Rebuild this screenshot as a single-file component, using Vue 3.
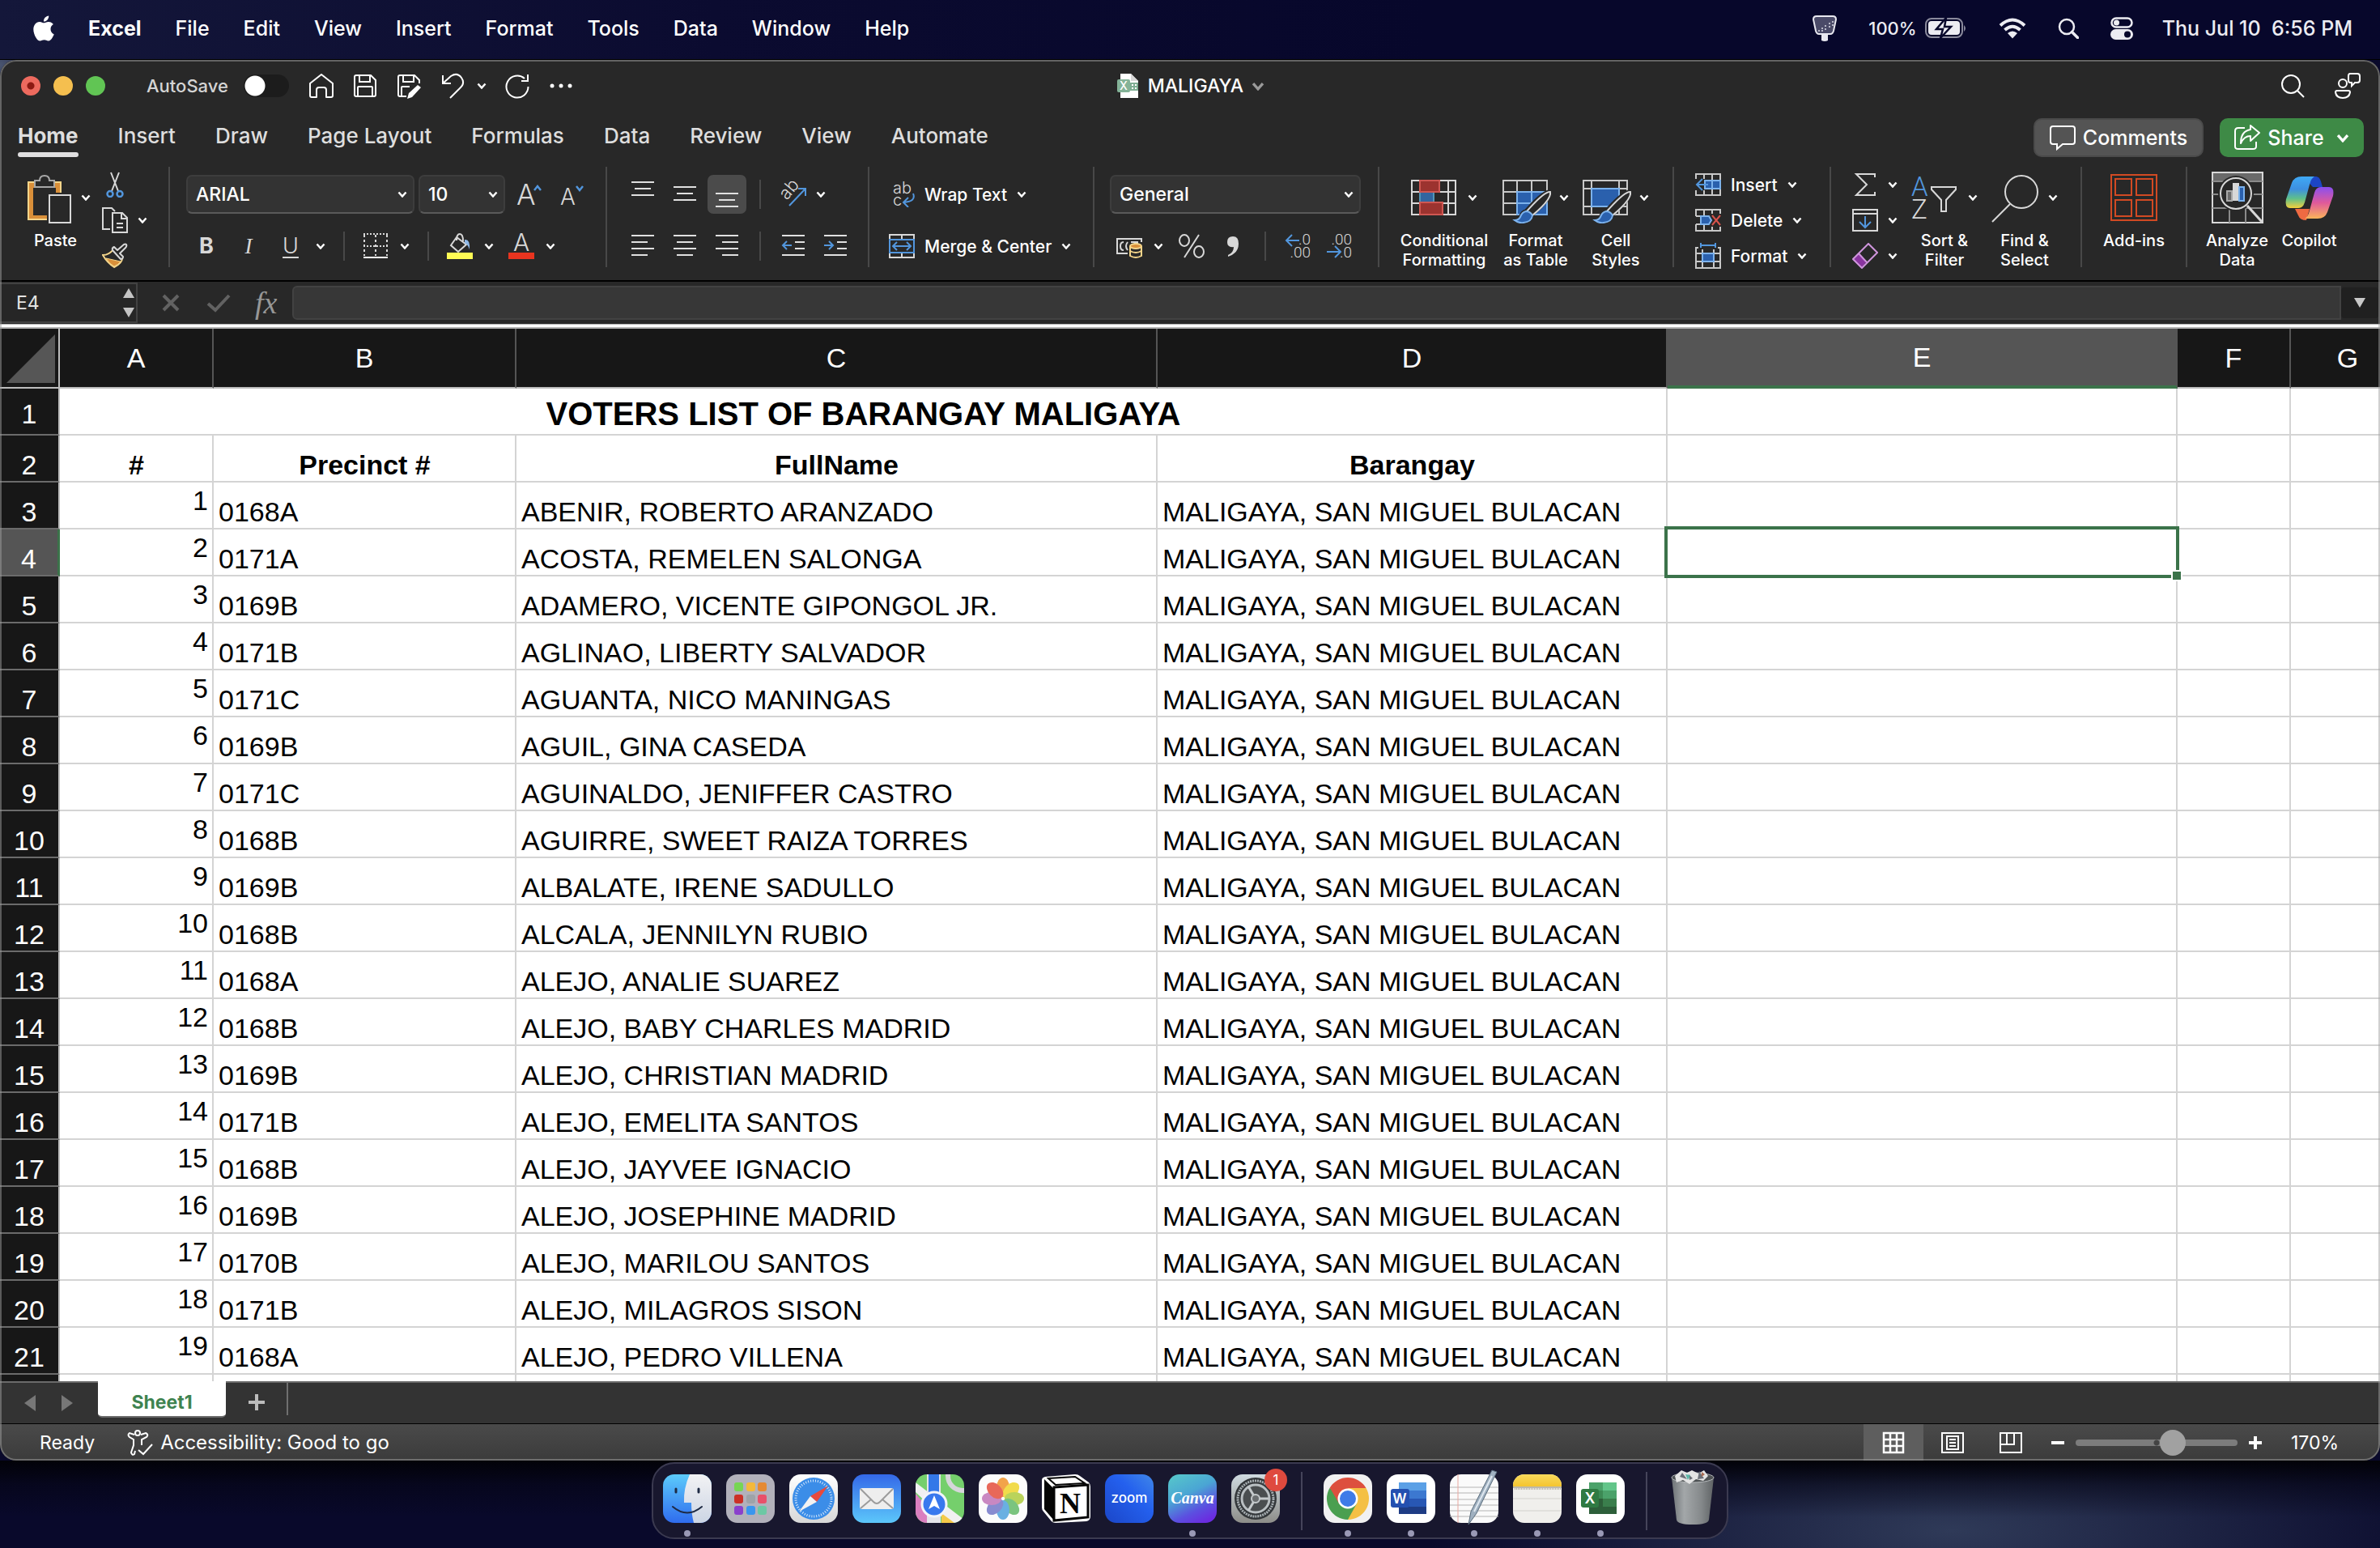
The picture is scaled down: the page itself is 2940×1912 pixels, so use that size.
<script setup>
import { ref } from 'vue'

const menus = ['File', 'Edit', 'View', 'Insert', 'Format', 'Tools', 'Data', 'Window', 'Help']
const tabs = ['Home', 'Insert', 'Draw', 'Page Layout', 'Formulas', 'Data', 'Review', 'View', 'Automate']
const activeTab = ref('Home')

const autoSave = ref(false)
const fontName = ref('ARIAL')
const fontSize = ref('10')
const numberFormat = ref('General')
const cellName = ref('E4')
const formula = ref('')
const zoomStep = ref(62)

const columns = ['A', 'B', 'C', 'D', 'E', 'F', 'G']
const barangay = 'MALIGAYA, SAN MIGUEL BULACAN'

const voters = [
  ['0168A', 'ABENIR, ROBERTO ARANZADO'],
  ['0171A', 'ACOSTA, REMELEN SALONGA'],
  ['0169B', 'ADAMERO, VICENTE GIPONGOL JR.'],
  ['0171B', 'AGLINAO, LIBERTY SALVADOR'],
  ['0171C', 'AGUANTA, NICO MANINGAS'],
  ['0169B', 'AGUIL, GINA CASEDA'],
  ['0171C', 'AGUINALDO, JENIFFER CASTRO'],
  ['0168B', 'AGUIRRE, SWEET RAIZA TORRES'],
  ['0169B', 'ALBALATE, IRENE SADULLO'],
  ['0168B', 'ALCALA, JENNILYN RUBIO'],
  ['0168A', 'ALEJO, ANALIE SUAREZ'],
  ['0168B', 'ALEJO, BABY CHARLES MADRID'],
  ['0169B', 'ALEJO, CHRISTIAN MADRID'],
  ['0171B', 'ALEJO, EMELITA SANTOS'],
  ['0168B', 'ALEJO, JAYVEE IGNACIO'],
  ['0169B', 'ALEJO, JOSEPHINE MADRID'],
  ['0170B', 'ALEJO, MARILOU SANTOS'],
  ['0171B', 'ALEJO, MILAGROS SISON'],
  ['0168A', 'ALEJO, PEDRO VILLENA'],
]

const dockApps = [
  { id: 'finder', open: true },
  { id: 'launchpad' },
  { id: 'safari' },
  { id: 'mail' },
  { id: 'maps' },
  { id: 'photos' },
  { id: 'notion' },
  { id: 'zoom', label: 'zoom' },
  { id: 'canva', label: 'Canva', open: true },
  { id: 'settings', badge: 1 },
]
const dockRecent = [
  { id: 'chrome', open: true },
  { id: 'word', open: true },
  { id: 'textedit', open: true },
  { id: 'notes', open: true },
  { id: 'excel', open: true },
]
</script>

<template>
  <div class="desktop">
    <!-- Gradients and clips -->
    <svg class="defs" aria-hidden="true">
      <defs>
        <linearGradient id="g-finder" x2="0" y2="1"><stop stop-color="#5ccbfb" /><stop offset="1" stop-color="#2f6cee" /></linearGradient>
        <linearGradient id="g-face" x2="0" y2="1"><stop stop-color="#f2f2f4" /><stop offset="1" stop-color="#ccd5e4" /></linearGradient>
        <linearGradient id="g-mail" x2="0" y2="1"><stop stop-color="#3468e8" /><stop offset="1" stop-color="#5cc7fa" /></linearGradient>
        <linearGradient id="g-white" x2="0" y2="1"><stop stop-color="#ffffff" /><stop offset="1" stop-color="#d8d8d8" /></linearGradient>
        <linearGradient id="g-zoom" x1="1" x2="0" y2="1"><stop stop-color="#4087e8" /><stop offset=".4" stop-color="#2460ee" /><stop offset="1" stop-color="#1b46c8" /></linearGradient>
        <linearGradient id="g-canva" x1=".2" x2=".7" y2="1"><stop stop-color="#55c3cb" /><stop offset=".4" stop-color="#4aa5d4" /><stop offset=".75" stop-color="#5b50e0" /><stop offset="1" stop-color="#6b2ce0" /></linearGradient>
        <linearGradient id="g-gear" x2="0" y2="1"><stop stop-color="#cfdae0" /><stop offset="1" stop-color="#8d8d89" /></linearGradient>
        <linearGradient id="g-notes" x2="0" y2="1"><stop stop-color="#f8d95c" /><stop offset="1" stop-color="#f5c52f" /></linearGradient>
        <linearGradient id="g-trash" x2="1" y2="0"><stop stop-color="#6e7376" /><stop offset=".3" stop-color="#a3a7a9" /><stop offset=".7" stop-color="#85898b" /><stop offset="1" stop-color="#5f6365" /></linearGradient>
        <linearGradient id="g-cop1" x2="0" y2="1"><stop stop-color="#3fa9f5" /><stop offset=".4" stop-color="#3d8fe0" /><stop offset=".7" stop-color="#5fc08a" /><stop offset="1" stop-color="#f5d03c" /></linearGradient>
        <linearGradient id="g-cop2" x2="0" y2="1"><stop stop-color="#8b4ff0" /><stop offset=".5" stop-color="#e05a9a" /><stop offset="1" stop-color="#fbb45a" /></linearGradient>
        <clipPath id="c-app"><rect width="60" height="60" rx="14" /></clipPath>
      </defs>
    </svg>

    <!-- Icon shapes -->
    <svg class="symbols" aria-hidden="true">
      <symbol id="i-apple" viewBox="2 0 20 24">
        <path fill="#fff" d="M12.152 6.896c-.948 0-2.415-1.078-3.96-1.04-2.04.027-3.91 1.183-4.961 3.014-2.117 3.675-.546 9.103 1.519 12.09 1.013 1.454 2.208 3.09 3.792 3.039 1.52-.065 2.09-.987 3.935-.987 1.831 0 2.35.987 3.96.948 1.637-.026 2.676-1.48 3.676-2.948 1.156-1.688 1.636-3.325 1.662-3.415-.039-.013-3.182-1.221-3.22-4.857-.026-3.04 2.48-4.494 2.597-4.559-1.429-2.09-3.623-2.324-4.39-2.376-2-.156-3.675 1.09-4.61 1.09zM15.53 3.83c.843-1.012 1.4-2.427 1.245-3.83-1.207.052-2.662.805-3.532 1.818-.78.896-1.454 2.338-1.273 3.714 1.338.104 2.715-.688 3.559-1.701" />
      </symbol>
      <symbol id="i-chev" viewBox="0 0 12 8"><path d="M1.500 1.500 6 6.500l4.500-5" fill="none" stroke="currentColor" stroke-width="2.500" /></symbol>
      <symbol id="i-brushapp" viewBox="0 0 30 32">
        <path d="M5 1h20q4 0 4 4l-3 14q-1 4-4 4H8q-3 0-4-4L1 5q0-4 4-4z" fill="#4a4a68" stroke="#e8e8f0" stroke-width="2" />
        <path d="M11 23h8v8q-4 2-8 0z" fill="#e8e8f0" />
        <path d="M7 19h2m2-3h2m-2 3h2m2-6h2m-2 4h2m3-7h2m-2 4h2m2-6h2m-2 4h2" stroke="#b8b8c8" stroke-width="2" />
      </symbol>
      <symbol id="i-battery" viewBox="0 0 52 26">
        <rect x="1" y="1" width="45" height="23" rx="7" fill="none" stroke="#8a8a9c" stroke-width="2" />
        <rect x="4" y="4" width="39" height="17" rx="4" fill="#ececf2" />
        <path d="M48 9q4 4 0 8z" fill="#8a8a9c" />
        <path d="M26 0 14 14h8l-3 11 13-14h-8z" fill="#ececf2" stroke="#07072b" stroke-width="2.500" />
      </symbol>
      <symbol id="i-wifi" viewBox="0 0 34 26">
        <g fill="none" stroke="#ececf2" stroke-width="4"><path d="M2 9.500q15-14 30 0" /><path d="M7.500 15q9.500-8.500 19 0" /></g>
        <path d="M17 25.500 11 19q6-5 12 0z" fill="#ececf2" />
      </symbol>
      <symbol id="i-spot" viewBox="0 0 26 26"><circle cx="11" cy="11" r="9" fill="none" stroke="#ececf2" stroke-width="2.500" /><path d="m17.500 17.500 7 7" stroke="#ececf2" stroke-width="3.500" stroke-linecap="round" /></symbol>
      <symbol id="i-control" viewBox="0 0 28 28">
        <rect x="1.500" y="1.500" width="25" height="11" rx="5.500" fill="none" stroke="#ececf2" stroke-width="2.500" /><circle cx="7.500" cy="7" r="3.500" fill="#ececf2" />
        <rect x="0" y="15" width="28" height="13" rx="6.500" fill="#ececf2" /><circle cx="21" cy="21.500" r="4" fill="#07072b" />
      </symbol>

      <symbol id="i-home" viewBox="0 0 32 32"><path d="M2 13 16 2l14 11v15q0 2-2 2h-6v-9q0-3-3-3h-6q-3 0-3 3v9H4q-2 0-2-2z" fill="none" stroke="#fff" stroke-width="2" stroke-linejoin="round" /></symbol>
      <symbol id="i-save" viewBox="0 0 32 32"><path d="M5 3h18l6 6v18q0 2-2 2H5q-2 0-2-2V5q0-2 2-2zM9 3v8h13V3M7 29V18q0-1 1-1h16q1 0 1 1v11" fill="none" stroke="#fff" stroke-width="2" /></symbol>
      <symbol id="i-savepen" viewBox="0 0 32 32"><path d="M13 29H5q-2 0-2-2V5q0-2 2-2h18l6 6v4M9 3v8h13V3M7 29V18q0-1 1-1h9" fill="none" stroke="#fff" stroke-width="2" /><path d="m27 15 4 3-11 12-6 2 2-7z" fill="#fff" /></symbol>
      <symbol id="i-undo" viewBox="0 0 32 32"><path d="M4 3v10h10M4 13 14 4q8-5 13 2t-2 13L13 31" fill="none" stroke="#fff" stroke-width="2" /></symbol>
      <symbol id="i-redo" viewBox="0 0 32 32"><path d="M25 7A13.500 13.500 0 1 0 29.500 17M29 2v8h-8" fill="none" stroke="#fff" stroke-width="2" /></symbol>
      <symbol id="i-dots" viewBox="0 0 32 32"><g fill="#fff"><circle cx="5" cy="16" r="2.500" /><circle cx="16" cy="16" r="2.500" /><circle cx="27" cy="16" r="2.500" /></g></symbol>
      <symbol id="i-file" viewBox="0 0 28 30">
        <path d="M4 0h13l9 9v21H4z" fill="#fff" /><path d="M17 0v9h9z" fill="#d8d8d8" />
        <path d="M17 12h8v8h-8zM21 12v8M17 16h8" fill="none" stroke="#7fae93" stroke-width="2" />
        <rect y="7" width="16" height="16" rx="2" fill="#84b398" /><text x="8" y="20" font-size="14" text-anchor="middle" fill="#fff" font-family="Inter, sans-serif">X</text>
      </symbol>
      <symbol id="i-find" viewBox="0 0 32 32"><circle cx="14" cy="14" r="11" fill="none" stroke="#fff" stroke-width="2" /><path d="m22 22 8 8" stroke="#fff" stroke-width="2" /></symbol>
      <symbol id="i-people" viewBox="0 0 32 32"><g fill="none" stroke="#fff" stroke-width="2"><circle cx="10" cy="13" r="5" /><path d="M3 22h14q2 0 2 2-1 7-9 7t-9-7q0-2 2-2zM19 1h9q3 0 3 3v5q0 3-3 3h-3l-4 4v-4h-2q-2 0-2-3V4q0-3 2-3z" /></g></symbol>
      <symbol id="i-comment" viewBox="0 0 32 32"><path d="M4 2h24q3 0 3 3v16q0 3-3 3H16l-7 6v-6H4q-3 0-3-3V5q0-3 3-3z" fill="none" stroke="#fff" stroke-width="2" /></symbol>
      <symbol id="i-share" viewBox="0 0 32 32"><path d="M13 4H5q-4 0-4 4v19q0 3 4 3h18q4 0 4-3v-6M20 1l11 9-11 10v-6q-8 0-12 9 0-15 12-17z" fill="none" stroke="#fff" stroke-width="2" stroke-linejoin="round" /></symbol>

      <symbol id="i-paste" viewBox="0 0 56 64">
        <path d="M0 12h42v14h-2V14H2v44h22v2H0z" fill="#f4d58a" /><path d="M2 14h38v12h-5V20H7v34h17v4H2z" fill="#d98f39" />
        <path d="M9 19v-8h6q0-6 6-6t6 6h6v8z" fill="#282828" stroke="#a8a8a8" stroke-width="2" />
        <path d="M27 29h26v34H27z" fill="#282828" stroke="#d8d8d8" stroke-width="2" />
      </symbol>
      <symbol id="i-cut" viewBox="0 0 32 32"><path d="M11 1 20 24M21 1 12 24" stroke="#d8d8d8" stroke-width="2" /><g fill="none" stroke="#5296dd" stroke-width="2.500"><circle cx="10" cy="27.500" r="3.500" /><circle cx="22" cy="27.500" r="3.500" /></g></symbol>
      <symbol id="i-copy" viewBox="0 0 32 32"><path d="M10 27H1V1h11l4 4M13 7h12l6 6v18H13zM24 7v7h7M18 20h8M18 25h8" fill="none" stroke="#d8d8d8" stroke-width="2" /></symbol>
      <symbol id="i-painter" viewBox="0 0 32 32">
        <path d="M1 15q8 0 13-7l11 11q0 6-10 11Q6 24 1 15z" fill="#282828" stroke="#f4d58a" stroke-width="2" /><path d="m5 19 18 4q-3 4-8 6-6-3-10-10z" fill="#d98f39" stroke="#f4d58a" stroke-width="1" />
        <path d="m15 5 4 4 8-7q2-1 3 0 1 2-1 4l-7 7 4 4q0 3-3 3L13 9q-1-3 2-4z" fill="#282828" stroke="#d8d8d8" stroke-width="2" stroke-linejoin="round" />
      </symbol>
      <symbol id="i-grow" viewBox="0 0 32 32"><text x="0" y="29" font-size="35" font-weight="300" fill="#d8d8d8" font-family="Inter, sans-serif">A</text><path d="m22 11 4-5 4 5" fill="none" stroke="#5296dd" stroke-width="2.500" /></symbol>
      <symbol id="i-shrink" viewBox="0 0 32 32"><text x="2" y="29" font-size="28" font-weight="300" fill="#d8d8d8" font-family="Inter, sans-serif">A</text><path d="m22 6 4 5 4-5" fill="none" stroke="#5296dd" stroke-width="2.500" /></symbol>
      <symbol id="i-border" viewBox="0 0 32 32"><path d="M1 1h30M1 16h30" stroke="#d8d8d8" stroke-width="2" stroke-dasharray="2 2" /><path d="M2 2v26M16 2v26M30 2v26" stroke="#d8d8d8" stroke-width="2" stroke-dasharray="3 3" /><path d="M1 30h30" stroke="#fff" stroke-width="2" /></symbol>
      <symbol id="i-fill" viewBox="0 0 32 32"><path d="M12 5 5 15l9 8 10-9zM12 9q0-8 4-8t4 9" fill="none" stroke="#d8d8d8" stroke-width="2" /><path d="M22 8q7-1 6 12-2-6-6-8z" fill="#8db8e8" /><path d="M0 24h32v8H0z" fill="#fffb54" /></symbol>
      <symbol id="i-color" viewBox="0 0 32 32"><text x="16" y="22" font-size="30" font-weight="300" text-anchor="middle" fill="#d8d8d8" font-family="Inter, sans-serif">A</text><path d="M0 24h32v8H0z" fill="#e8341f" /></symbol>

      <symbol id="i-top" viewBox="0 0 32 32"><path d="M2 1h28M6 9h20M2 17h28" stroke="#e0e0e0" stroke-width="2" /></symbol>
      <symbol id="i-mid" viewBox="0 0 32 32"><path d="M2 7h28M6 15h20M2 23h28" stroke="#e0e0e0" stroke-width="2" /></symbol>
      <symbol id="i-bot" viewBox="0 0 32 32"><path d="M2 15h28M6 23h20M2 31h28" stroke="#e0e0e0" stroke-width="2" /></symbol>
      <symbol id="i-left" viewBox="0 0 32 32"><path d="M2 3h28M2 11h20M2 19h28M2 27h20" stroke="#e0e0e0" stroke-width="2" /></symbol>
      <symbol id="i-center" viewBox="0 0 32 32"><path d="M2 3h28M6 11h20M2 19h28M6 27h20" stroke="#e0e0e0" stroke-width="2" /></symbol>
      <symbol id="i-right" viewBox="0 0 32 32"><path d="M2 3h28M10 11h20M2 19h28M10 27h20" stroke="#e0e0e0" stroke-width="2" /></symbol>
      <symbol id="i-outdent" viewBox="0 0 32 32"><path d="M2 3h28M18 11h12M18 19h12M2 27h28" stroke="#e0e0e0" stroke-width="2" /><path d="M14 15H3m5-5-5 5 5 5" fill="none" stroke="#5296dd" stroke-width="2" /></symbol>
      <symbol id="i-indent" viewBox="0 0 32 32"><path d="M2 3h28M18 11h12M18 19h12M2 27h28" stroke="#e0e0e0" stroke-width="2" /><path d="M2 15h11m-5-5 5 5-5 5" fill="none" stroke="#5296dd" stroke-width="2" /></symbol>
      <symbol id="i-orient" viewBox="0 0 32 32"><text x="0" y="0" transform="translate(8 24) rotate(-50)" font-size="22" font-weight="300" fill="#d8d8d8" font-family="Inter, sans-serif">ab</text><path d="m11 30 20-21M22 9h9v9" fill="none" stroke="#5296dd" stroke-width="2" /></symbol>
      <symbol id="i-wrap" viewBox="0 0 32 32"><text x="5" y="15" font-size="20" font-weight="300" fill="#d8d8d8" font-family="Inter, sans-serif">ab</text><text x="5" y="30" font-size="20" font-weight="300" fill="#d8d8d8" font-family="Inter, sans-serif">c</text><path d="M30 15q4 10-12 11m6-6-6 6 6 6" fill="none" stroke="#5296dd" stroke-width="2" /></symbol>
      <symbol id="i-merge" viewBox="0 0 32 32"><path d="M1 2h30v28H1zM16 2v6M16 24v6" fill="none" stroke="#d8d8d8" stroke-width="2" /><path d="M1 8h30v16H1zM6 16h20m-16-5-5 5 5 5m12-10 5 5-5 5" fill="#282828" stroke="#5296dd" stroke-width="2" /></symbol>
      <symbol id="i-money" viewBox="0 0 32 32"><path d="M31 11V7H1v18h13M9 11q-4 0-4 5t4 5M14 21q-4-5 0-10M18 11h8v2h-4" fill="none" stroke="#d8d8d8" stroke-width="2" /><path d="M17 16v12q7 4 14 0V16" fill="#282828" /><path d="M17 16v12q7 4 14 0V16M17 22q7 4 14 0" fill="none" stroke="#f4d58a" stroke-width="2" /><ellipse cx="24" cy="16" rx="7" ry="3" fill="#d98f39" stroke="#f4d58a" stroke-width="2" /></symbol>
      <symbol id="i-percent" viewBox="0 0 32 32"><g fill="none" stroke="#d8d8d8" stroke-width="2"><ellipse cx="7" cy="9" rx="6" ry="7" /><ellipse cx="25" cy="23" rx="6" ry="7" /><path d="M25 2 7 30" /></g></symbol>
      <symbol id="i-comma" viewBox="0 0 32 32"><path d="M16 4q7 0 7 9 0 12-13 16v-2q7-3 7-10-8 1-8-6 0-7 7-7z" fill="#d8d8d8" /></symbol>
      <symbol id="i-incdec" viewBox="0 0 32 32"><g font-size="19" fill="#d8d8d8" text-anchor="end" font-family="Roboto, sans-serif" font-weight="300"><text x="32" y="14">.0</text><text x="32" y="30">.00</text></g><path d="M18 9H2m7-7L2 9l7 7" fill="none" stroke="#5296dd" stroke-width="2" /></symbol>
      <symbol id="i-decdec" viewBox="0 0 32 32"><g font-size="19" fill="#d8d8d8" text-anchor="end" font-family="Roboto, sans-serif" font-weight="300"><text x="32" y="14">.00</text><text x="32" y="30">.0</text></g><path d="M1 23h17m-7-7 7 7-7 7" fill="none" stroke="#5296dd" stroke-width="2" /></symbol>

      <symbol id="i-cond" viewBox="0 0 60 64"><path d="M1 11h54v42H1zM46 11v42M1 25h54M1 39h54" fill="none" stroke="#d8d8d8" stroke-width="2" /><path d="M11 25h17v13H11z" fill="#33659f" stroke="#5296b8" stroke-width="2" /><path d="M11 11h24v14H11zM11 38h28v15H11z" fill="#9c332f" stroke="#cf5752" stroke-width="2" /></symbol>
      <symbol id="i-brush" viewBox="0 0 60 64">
        <path d="M58 25q-8 0-29 24-5 1-7 8-2 4-7 4 5 4 12 3 9-2 9-11 24-20 22-28z" fill="#282828" stroke="#282828" stroke-width="5" />
        <path d="M59 25q-7-1-29 24l7 5q24-20 22-29z" fill="#282828" stroke="#d8d8d8" stroke-width="2" /><path d="M29 49q-5 1-7 7-2 4-7 4 5 4 11 3 10-1 11-9-3-5-8-5z" fill="#2a60ad" stroke="#7cb2ec" stroke-width="2" />
      </symbol>
      <symbol id="i-astable" viewBox="0 0 60 64"><path d="M1 11h54v42H1zM18 11v42M36 11v42M1 25h54M1 39h54" fill="none" stroke="#c8c8c8" stroke-width="2" /><path d="M18 25h37v28H18zM36 25v28M18 39h37" fill="#2a60ad" stroke="#7cb2ec" stroke-width="2" /><use href="#i-brush" width="60" height="64" /></symbol>
      <symbol id="i-cell" viewBox="0 0 60 64"><path d="M1 11h54v42H1zM11 11v42M45 11v42M1 21h54M1 43h54" fill="none" stroke="#c8c8c8" stroke-width="2" /><path d="M11 21h34v22H11z" fill="#2a60ad" stroke="#7cb2ec" stroke-width="2" /><use href="#i-brush" width="60" height="64" /></symbol>
      <symbol id="i-ins" viewBox="0 0 32 32"><path d="M1 3h30v26H1zM11 3v26M21 3v26" fill="none" stroke="#c8c8c8" stroke-width="2" /><path d="M0 9h12v14H0z" fill="#282828" /><path d="M12 11h19v10H12zM21 11v10" fill="#2a60ad" stroke="#7cb2ec" stroke-width="2" /><path d="M16 16H2m7-7-7 7 7 7" fill="none" stroke="#5296dd" stroke-width="2" /></symbol>
      <symbol id="i-del" viewBox="0 0 32 32"><path d="M1 11V3h30v8M1 21v8h30v-8M11 3v26M21 3v26M1 11h8M1 21h8" fill="none" stroke="#c8c8c8" stroke-width="2" /><path d="M17 8h15v16H17z" fill="#282828" /><path d="M7 11h10l3 5-3 5H7z" fill="#2a60ad" stroke="#7cb2ec" stroke-width="2" /><path d="m21 10 10 12M31 10 21 22" stroke="#d9534c" stroke-width="2" /></symbol>
      <symbol id="i-fmt" viewBox="0 0 32 32"><path d="M4 6H1v25h30V6h-3M9 8v23M23 8v23M1 13h30M1 23h30" fill="none" stroke="#c8c8c8" stroke-width="2" /><path d="M9 13h14v10H9z" fill="#2a60ad" stroke="#7cb2ec" stroke-width="2" /><path d="M7 0v6M25 0v6M7 3h18" stroke="#5296dd" stroke-width="2" /></symbol>
      <symbol id="i-sum" viewBox="0 0 32 32"><path d="M28 7V3H5l13 13L5 29h23v-4" fill="none" stroke="#d8d8d8" stroke-width="2" /></symbol>
      <symbol id="i-filldown" viewBox="0 0 32 32"><path d="M1 3h30v26H1zM1 8h30" fill="none" stroke="#d8d8d8" stroke-width="2" /><path d="M16 11v14m-7-7 7 7 7-7" fill="none" stroke="#5296dd" stroke-width="2" /></symbol>
      <symbol id="i-clear" viewBox="0 0 32 32"><path d="m8 13 10 10-7 8L1 21z" fill="#8a34a0" /><path d="M20 1 31 12 12 31 1 20zM8 13l10 11" fill="none" stroke="#cf95dc" stroke-width="2" /></symbol>
      <symbol id="i-sort" viewBox="0 0 60 64"><text x="0" y="30" font-size="33" font-weight="300" fill="#5296dd" font-family="Roboto, sans-serif">A</text><text x="0" y="58" font-size="33" font-weight="300" fill="#d8d8d8" font-family="Roboto, sans-serif">Z</text><path d="M25 19h30v3L43 35v14h-6V35L25 22z" fill="none" stroke="#d8d8d8" stroke-width="2" /></symbol>
      <symbol id="i-lens" viewBox="0 0 60 64"><circle cx="37" cy="25" r="20" fill="none" stroke="#d8d8d8" stroke-width="2" /><path d="M23 40 1 62" stroke="#d8d8d8" stroke-width="2" /></symbol>
      <symbol id="i-addins" viewBox="0 0 60 64"><g fill="none" stroke="#d24a23" stroke-width="2"><path d="M2 4h56v56H2zM7 9h20v20H7zM33 9h20v20H33zM7 35h20v20H7zM33 35h20v20H33z" /></g></symbol>
      <symbol id="i-analyze" viewBox="0 0 64 64"><path d="M1 1h62v62H1z" fill="none" stroke="#d8d8d8" stroke-width="2" /><path d="M2 2h60v9H2z" fill="#6a6a6a" /><path d="M1 12h62M1 28h62M1 45h62M22 45v18M42 45v18" stroke="#8a8a8a" stroke-width="2" /><circle cx="30" cy="27" r="22" fill="#282828" /><circle cx="30" cy="27" r="19" fill="#282828" stroke="#d8d8d8" stroke-width="2" /><path d="M19 24h6v12h-6z" fill="#6a6a6a" stroke="#a8a8a8" stroke-width="2" /><path d="M26 14h8v22h-8z" fill="#d8d8d8" /><path d="M34 19h6v17h-6z" fill="#2a60ad" stroke="#7cb2ec" stroke-width="2" /><path d="m44 42 19 21" stroke="#d8d8d8" stroke-width="3" /></symbol>
      <symbol id="i-copilot" viewBox="0 0 64 64">
        <path d="M24 6h16q4 0 6 6l2 7H36z" fill="#1d45c4" /><path d="M14 46h18l-4 14q-8 0-10-6z" fill="#ee6a42" />
        <path d="M22 6h16q-4 2-6 10l-6 22q-2 7-8 7H8Q1 45 3 34L10 14q3-8 12-8z" fill="url(#g-cop1)" />
        <path d="M42 58H26q4-2 6-10l6-22q2-7 8-7h10q7 0 5 11l-7 20q-3 8-12 8z" fill="url(#g-cop2)" />
      </symbol>

      <symbol id="i-x" viewBox="0 0 24 24"><path d="m3 3 18 18M21 3 3 21" stroke="#626262" stroke-width="4" /></symbol>
      <symbol id="i-check" viewBox="0 0 30 24"><path d="m2 13 9 8L28 3" fill="none" stroke="#626262" stroke-width="4" /></symbol>
      <symbol id="i-access" viewBox="0 0 32 32"><g fill="none" stroke="#fff" stroke-width="2"><circle cx="13" cy="4" r="3" /><path d="M9 6 3 4Q0 6 3 9l5 3v7l-3 9q1 4 4 2l1-4M17 6l6-2q4 2 1 5l-6 3v7M14 25l6 5 11-12" /></g></symbol>
      <symbol id="i-grid" viewBox="0 0 28 28"><path d="M2 2h24v24H2zM10 2v24M18 2v24M2 10h24M2 18h24" fill="none" stroke="#fff" stroke-width="2.500" /></symbol>
      <symbol id="i-page" viewBox="0 0 28 28"><path d="M1 2h26v24H1zM7 6h14v16H7zM10 10h8M10 14h8M10 18h8" fill="none" stroke="#fff" stroke-width="2" /></symbol>
      <symbol id="i-break" viewBox="0 0 28 28"><path d="M1 2h26v24H1zM9 2v14M18 2v14H1" fill="none" stroke="#fff" stroke-width="2" /></symbol>

      <symbol id="d-finder" viewBox="0 0 60 60"><g clip-path="url(#c-app)"><path d="M0 0h60v60H0z" fill="url(#g-finder)" /><path d="M33 0q-8 18-7 35h9q0 14 3 25h22V0z" fill="url(#g-face)" /></g><path d="M16 18v4M44 18v4" stroke="#1e2a44" stroke-width="3" stroke-linecap="round" /><path d="M12 40q18 15 36 0" fill="none" stroke="#1e2a44" stroke-width="2" stroke-linecap="round" /></symbol>
      <symbol id="d-launchpad" viewBox="0 0 60 60"><rect width="60" height="60" rx="14" fill="#b2b1bb" />
        <g><rect x="10" y="10" width="11" height="11" rx="3" fill="#76d653" /><rect x="25" y="10" width="11" height="11" rx="3" fill="#f4b93c" /><rect x="39" y="10" width="11" height="11" rx="3" fill="#e58a33" /><rect x="10" y="25" width="11" height="11" rx="3" fill="#cc3026" /><rect x="25" y="25" width="11" height="11" rx="3" fill="#9ea3a8" /><rect x="39" y="25" width="11" height="11" rx="3" fill="#e8506a" /><rect x="10" y="39" width="11" height="11" rx="3" fill="#8a40cc" /><rect x="25" y="39" width="11" height="11" rx="3" fill="#3a96ee" /><rect x="39" y="39" width="11" height="11" rx="3" fill="#6cc8a4" /></g></symbol>
      <symbol id="d-safari" viewBox="0 0 60 60"><rect width="60" height="60" rx="14" fill="url(#g-white)" /><circle cx="30" cy="30" r="26" fill="#3b8de8" /><circle cx="30" cy="30" r="22" fill="none" stroke="#d8e8fa" stroke-width="3" stroke-dasharray="1 2" /><path d="m48 14-14 20-8-7z" fill="#e8493c" /><path d="m12 46 14-19 8 7z" fill="#f2f2f2" /></symbol>
      <symbol id="d-mail" viewBox="0 0 60 60"><rect width="60" height="60" rx="14" fill="url(#g-mail)" /><rect x="9" y="17" width="42" height="26" rx="3" fill="#eeeeee" /><path d="m10 18 16 16q4 4 8 0l16-16M10 42l13-11M50 42 37 31" fill="none" stroke="#9c9c9c" stroke-width="2" /></symbol>
      <symbol id="d-maps" viewBox="0 0 60 60"><g clip-path="url(#c-app)"><path d="M0 0h60v60H0z" fill="#75cf6c" /><path d="M0 24 14 40v20H0z" fill="#da7fc0" /><path d="m0 10 60 46v4H40L0 22z" fill="#f0f0f2" /><path d="M32 60V48l16 12z" fill="#f5c94a" /><path d="M14 0h17v60H14z" fill="#e4e4ea" /><path d="M16 0h13v34H16z" fill="#3478e8" /><circle cx="58" cy="2" r="18" fill="none" stroke="#d6d6da" stroke-width="6" /></g><circle cx="23" cy="37" r="15" fill="#3878ee" stroke="#f2f4fa" stroke-width="3" /><path d="m23 26 7 17-7-4-7 4z" fill="#fff" /></symbol>
      <symbol id="d-photos" viewBox="0 0 60 60"><rect width="60" height="60" rx="14" fill="#fcfcfc" /><g opacity=".9"><ellipse cx="30" cy="16" rx="8" ry="12" fill="#f29a37" /><ellipse cx="30" cy="16" rx="8" ry="12" fill="#f0d83a" transform="rotate(45 30 30)" /><ellipse cx="30" cy="16" rx="8" ry="12" fill="#b3cf4a" transform="rotate(90 30 30)" /><ellipse cx="30" cy="16" rx="8" ry="12" fill="#6ebe72" transform="rotate(135 30 30)" /><ellipse cx="30" cy="16" rx="8" ry="12" fill="#5aa8e0" transform="rotate(180 30 30)" /><ellipse cx="30" cy="16" rx="8" ry="12" fill="#7c80cc" transform="rotate(225 30 30)" /><ellipse cx="30" cy="16" rx="8" ry="12" fill="#c47cbc" transform="rotate(270 30 30)" /><ellipse cx="30" cy="16" rx="8" ry="12" fill="#e65848" transform="rotate(315 30 30)" /></g></symbol>
      <symbol id="d-notion" viewBox="0 0 60 60"><path d="m4 3 37-3q4 0 6 2l11 8q2 2 2 5v37q0 5-5 6l-38 2q-4 0-6-3L2 46Q0 44 0 41V7q0-3 4-4z" fill="#fff" /><path d="m3 6 12 12v39L3 43z" fill="#050505" /><path d="m8 5 33-2 12 8-36 2z" fill="#fff" stroke="#050505" stroke-width="2" /><path d="m15 16 42-3v40l-42 4z" fill="#fff" stroke="#050505" stroke-width="3" /><text x="35" y="48" font-size="36" font-weight="700" text-anchor="middle" fill="#050505" font-family="Liberation Serif, serif">N</text></symbol>
      <symbol id="d-zoom" viewBox="0 0 60 60"><rect width="60" height="60" rx="14" fill="url(#g-zoom)" /></symbol>
      <symbol id="d-canva" viewBox="0 0 60 60"><rect width="60" height="60" rx="14" fill="url(#g-canva)" /></symbol>
      <symbol id="d-settings" viewBox="0 0 60 60"><rect width="60" height="60" rx="14" fill="url(#g-gear)" /><circle cx="30" cy="30" r="26" fill="#33373a" /><circle cx="30" cy="30" r="22" fill="none" stroke="#a9b0b4" stroke-width="3" stroke-dasharray="2 1" /><circle cx="30" cy="30" r="17" fill="#4a4e50" stroke="#b9bfc2" stroke-width="3" /><path d="M30 30h16M30 30l-9-15M30 30l-9 15" stroke="#c4c9cb" stroke-width="3" /><circle cx="30" cy="30" r="5" fill="#6a6e70" stroke="#c4c9cb" stroke-width="2" /></symbol>
      <symbol id="d-chrome" viewBox="0 0 60 60"><rect width="60" height="60" rx="14" fill="#f1f1f1" /><path d="M30 30 7.480 17A26 26 0 0 1 52.520 17z" fill="#dd4f3e" /><path d="M30 30 52.520 17A26 26 0 0 1 30 56z" fill="#f4c044" /><path d="M30 30 30 56A26 26 0 0 1 7.480 17z" fill="#4a9f50" /><path d="M30 17h22.500l-8.500 20z" fill="#f4c044" /><path d="M41 36 30 56l-12-20z" fill="#4a9f50" /><path d="M19 36 8 17l22 1z" fill="#dd4f3e" /><circle cx="30" cy="30" r="12.500" fill="#fff" /><circle cx="30" cy="30" r="10" fill="#3f7be8" /></symbol>
      <symbol id="d-word" viewBox="0 0 60 60"><rect width="60" height="60" rx="14" fill="#fff" /><path d="M15 10h34v10H15z" fill="#5ba0e6" /><path d="M15 20h34v10H15z" fill="#3c78d0" /><path d="M15 30h34v10H15z" fill="#2857b4" /><path d="M15 40h34v9H15z" fill="#1e3c84" /><rect x="5" y="18" width="23" height="23" rx="3" fill="#2450b0" /><text x="16" y="36" font-size="17" font-weight="600" text-anchor="middle" fill="#fff" font-family="Inter, sans-serif">W</text></symbol>
      <symbol id="d-excel" viewBox="0 0 60 60"><rect width="60" height="60" rx="14" fill="#fff" /><path d="M16 10h17v10H16z" fill="#4ba26a" /><path d="M33 10h17v10H33z" fill="#63c58a" /><path d="M16 20h17v10H16z" fill="#3c8a54" /><path d="M33 20h17v10H33z" fill="#4ba26a" /><path d="M16 30h34v19H16z" fill="#2d5f3a" /><path d="M33 30h17v10H33z" fill="#3a7e4c" /><rect x="6" y="18" width="22" height="23" rx="3" fill="#2f7a43" /><text x="17" y="36" font-size="18" font-weight="600" text-anchor="middle" fill="#fff" font-family="Inter, sans-serif">X</text></symbol>
      <symbol id="d-textedit" viewBox="0 -6 60 72"><rect width="60" height="60" rx="14" fill="#fafafa" /><path d="M0 16h60M0 23h60M0 31h60M0 38h60M0 45h60M0 52h60" stroke="#b4b4b4" stroke-width="1" /><path d="M10 0v60" stroke="#e8a8a0" /><path d="m52-5 6 2-25 51-10 14 3-16z" fill="#9fb0c0" stroke="#5a6c7c" stroke-width="1" /><path d="M52 2 30 46" stroke="#dfe8f0" stroke-width="2" /></symbol>
      <symbol id="d-notes" viewBox="0 0 60 60"><g clip-path="url(#c-app)"><path d="M0 0h60v60H0z" fill="#f0efec" /><path d="M0 0h60v15H0z" fill="url(#g-notes)" /><path d="M0 16h60" stroke="#8a8368" stroke-width="1" /><path d="M2 18h58" stroke="#b8b4a8" stroke-width="2" stroke-dasharray="1 1" /><path d="M0 30h60M0 45h60" stroke="#d2d1cd" /></g></symbol>
      <symbol id="d-trash" viewBox="0 -6 60 72"><path d="M4 4h52l-6 52q-1 6-20 6t-20-6z" fill="url(#g-trash)" /><ellipse cx="30" cy="4" rx="26" ry="6" fill="#4e5254" stroke="#b4b8ba" stroke-width="1" /><path d="m8 2 8-7 7 3 6-3 8 4 7-4 5 7-6 6-9-2-8 6-8-5-8 3z" fill="#e4e4e4" /><path d="m17-2 6 8-9-3zM38-4l6 9-8 1zM25 0l5 5-4 2z" fill="#6b6f78" /><path d="m21 0 6 1-3 6z" fill="#5cb8a8" /><path d="m41-3 4 3-4 3z" fill="#a86a50" /></symbol>
    </svg>

    <!-- System menu bar -->
    <header class="menubar">
      <nav class="menus">
        <button class="apple" aria-label="Apple menu"><svg class="ico-apple"><use href="#i-apple" /></svg></button>
        <button class="app-name">Excel</button>
        <button v-for="m in menus" :key="m">{{ m }}</button>
      </nav>
      <div class="menu-extras">
        <svg class="ico-brushapp"><use href="#i-brushapp" /></svg>
        <span class="power">100%<svg class="ico-battery"><use href="#i-battery" /></svg></span>
        <svg class="ico-wifi"><use href="#i-wifi" /></svg>
        <svg class="ico-26"><use href="#i-spot" /></svg>
        <svg class="ico-28"><use href="#i-control" /></svg>
        <span class="clock">Thu Jul 10&nbsp; 6:56 PM</span>
      </div>
    </header>

    <main class="window">
      <div class="titlebar">
        <div class="title-left">
          <div class="lights">
            <button class="light red" aria-label="Close"></button>
            <button class="light yellow" aria-label="Minimize"></button>
            <button class="light green" aria-label="Full screen"></button>
          </div>
          <label class="autosave">AutoSave<input v-model="autoSave" type="checkbox" /></label>
          <div class="quick">
            <button aria-label="Home"><svg class="ico"><use href="#i-home" /></svg></button>
            <button aria-label="Save"><svg class="ico"><use href="#i-save" /></svg></button>
            <button aria-label="Save as"><svg class="ico"><use href="#i-savepen" /></svg></button>
            <button class="pair" aria-label="Undo"><svg class="ico"><use href="#i-undo" /></svg><svg class="chev"><use href="#i-chev" /></svg></button>
            <button aria-label="Redo"><svg class="ico"><use href="#i-redo" /></svg></button>
            <button aria-label="More"><svg class="ico"><use href="#i-dots" /></svg></button>
          </div>
        </div>
        <button class="doc-title"><svg class="ico-file"><use href="#i-file" /></svg>MALIGAYA<svg class="chev wide dim"><use href="#i-chev" /></svg></button>
        <div class="title-right">
          <button aria-label="Search"><svg class="ico"><use href="#i-find" /></svg></button>
          <button aria-label="Presence"><svg class="ico"><use href="#i-people" /></svg></button>
        </div>
      </div>

      <div class="tabrow">
        <nav class="tabs">
          <button v-for="t in tabs" :key="t" :class="{ active: t === activeTab }" @click="activeTab = t">{{ t }}</button>
        </nav>
        <div class="actions">
          <button class="comments"><svg class="ico"><use href="#i-comment" /></svg>Comments</button>
          <button class="share"><svg class="ico"><use href="#i-share" /></svg>Share<svg class="chev wide"><use href="#i-chev" /></svg></button>
        </div>
      </div>

      <div class="ribbon">
        <div class="group g-clip">
          <button class="big paste">
            <span class="big-top"><svg class="ico-paste"><use href="#i-paste" /></svg><svg class="chev"><use href="#i-chev" /></svg></span>
            <span class="big-label">Paste</span>
          </button>
          <div class="stack">
            <button aria-label="Cut"><svg class="ico"><use href="#i-cut" /></svg></button>
            <button aria-label="Copy"><svg class="ico"><use href="#i-copy" /></svg><svg class="chev"><use href="#i-chev" /></svg></button>
            <button aria-label="Format painter"><svg class="ico"><use href="#i-painter" /></svg></button>
          </div>
        </div>
        <span class="rule"></span>

        <div class="group rows g-font">
          <div class="row">
            <span class="select font-name"><select v-model="fontName" aria-label="Font"><option>ARIAL</option></select><svg class="chev"><use href="#i-chev" /></svg></span>
            <span class="select font-size"><select v-model="fontSize" aria-label="Font size"><option>10</option></select><svg class="chev"><use href="#i-chev" /></svg></span>
            <button class="grow" aria-label="Increase font size"><svg class="ico"><use href="#i-grow" /></svg></button>
            <button class="shrink" aria-label="Decrease font size"><svg class="ico"><use href="#i-shrink" /></svg></button>
          </div>
          <div class="row font-tools">
            <button class="letter bold">B</button>
            <button class="letter italic">I</button>
            <button class="pair"><span class="letter underline">U</span><svg class="chev"><use href="#i-chev" /></svg></button>
            <span class="mini-rule"></span>
            <button class="pair" aria-label="Borders"><svg class="ico"><use href="#i-border" /></svg><svg class="chev"><use href="#i-chev" /></svg></button>
            <span class="mini-rule"></span>
            <button class="pair" aria-label="Fill color"><svg class="ico"><use href="#i-fill" /></svg><svg class="chev"><use href="#i-chev" /></svg></button>
            <button class="pair" aria-label="Font color"><svg class="ico"><use href="#i-color" /></svg><svg class="chev"><use href="#i-chev" /></svg></button>
          </div>
        </div>
        <span class="rule"></span>

        <div class="group rows g-align">
          <div class="row">
            <button class="sq" aria-label="Top align"><svg class="ico"><use href="#i-top" /></svg></button>
            <button class="sq" aria-label="Middle align"><svg class="ico"><use href="#i-mid" /></svg></button>
            <button class="sq on" aria-label="Bottom align"><svg class="ico"><use href="#i-bot" /></svg></button>
            <span class="mini-rule"></span>
            <button class="sq" aria-label="Orientation"><svg class="ico"><use href="#i-orient" /></svg></button>
            <svg class="chev"><use href="#i-chev" /></svg>
          </div>
          <div class="row">
            <button class="sq" aria-label="Align left"><svg class="ico"><use href="#i-left" /></svg></button>
            <button class="sq" aria-label="Center"><svg class="ico"><use href="#i-center" /></svg></button>
            <button class="sq" aria-label="Align right"><svg class="ico"><use href="#i-right" /></svg></button>
            <span class="mini-rule"></span>
            <button class="sq" aria-label="Decrease indent"><svg class="ico"><use href="#i-outdent" /></svg></button>
            <button class="sq" aria-label="Increase indent"><svg class="ico"><use href="#i-indent" /></svg></button>
          </div>
        </div>
        <span class="rule"></span>

        <div class="group rows g-wrap">
          <div class="row"><button class="text-btn"><svg class="ico"><use href="#i-wrap" /></svg>Wrap Text<svg class="chev"><use href="#i-chev" /></svg></button></div>
          <div class="row"><button class="text-btn"><svg class="ico"><use href="#i-merge" /></svg>Merge &amp; Center<svg class="chev"><use href="#i-chev" /></svg></button></div>
        </div>
        <span class="rule"></span>

        <div class="group rows g-number">
          <div class="row">
            <span class="select number-format"><select v-model="numberFormat" aria-label="Number format"><option>General</option></select><svg class="chev"><use href="#i-chev" /></svg></span>
          </div>
          <div class="row number-tools">
            <button class="pair" aria-label="Currency"><svg class="ico"><use href="#i-money" /></svg><svg class="chev"><use href="#i-chev" /></svg></button>
            <button aria-label="Percent"><svg class="ico"><use href="#i-percent" /></svg></button>
            <button aria-label="Comma style"><svg class="ico"><use href="#i-comma" /></svg></button>
            <span class="mini-rule"></span>
            <button aria-label="Increase decimal"><svg class="ico"><use href="#i-incdec" /></svg></button>
            <button aria-label="Decrease decimal"><svg class="ico"><use href="#i-decdec" /></svg></button>
          </div>
        </div>
        <span class="rule"></span>

        <div class="group g-styles">
          <button class="big cond"><span class="big-top"><svg class="ico-big"><use href="#i-cond" /></svg><svg class="chev"><use href="#i-chev" /></svg></span><span class="big-label">Conditional<br />Formatting</span></button>
          <button class="big"><span class="big-top"><svg class="ico-big"><use href="#i-astable" /></svg><svg class="chev"><use href="#i-chev" /></svg></span><span class="big-label">Format<br />as Table</span></button>
          <button class="big"><span class="big-top"><svg class="ico-big"><use href="#i-cell" /></svg><svg class="chev"><use href="#i-chev" /></svg></span><span class="big-label">Cell<br />Styles</span></button>
        </div>
        <span class="rule"></span>

        <div class="group g-cells">
          <div class="stack">
            <button class="text-btn"><svg class="ico"><use href="#i-ins" /></svg>Insert<svg class="chev"><use href="#i-chev" /></svg></button>
            <button class="text-btn"><svg class="ico"><use href="#i-del" /></svg>Delete<svg class="chev"><use href="#i-chev" /></svg></button>
            <button class="text-btn"><svg class="ico"><use href="#i-fmt" /></svg>Format<svg class="chev"><use href="#i-chev" /></svg></button>
          </div>
        </div>
        <span class="rule"></span>

        <div class="group g-edit">
          <div class="stack">
            <button aria-label="AutoSum"><svg class="ico"><use href="#i-sum" /></svg><svg class="chev"><use href="#i-chev" /></svg></button>
            <button aria-label="Fill"><svg class="ico"><use href="#i-filldown" /></svg><svg class="chev"><use href="#i-chev" /></svg></button>
            <button aria-label="Clear"><svg class="ico"><use href="#i-clear" /></svg><svg class="chev"><use href="#i-chev" /></svg></button>
          </div>
          <button class="big"><span class="big-top"><svg class="ico-big"><use href="#i-sort" /></svg><svg class="chev"><use href="#i-chev" /></svg></span><span class="big-label">Sort &amp;<br />Filter</span></button>
          <button class="big"><span class="big-top"><svg class="ico-big"><use href="#i-lens" /></svg><svg class="chev"><use href="#i-chev" /></svg></span><span class="big-label">Find &amp;<br />Select</span></button>
        </div>
        <span class="rule"></span>

        <div class="group g-addins">
          <button class="big"><span class="big-top"><svg class="ico-big"><use href="#i-addins" /></svg></span><span class="big-label">Add-ins</span></button>
        </div>
        <span class="rule"></span>

        <div class="group g-ai">
          <button class="big"><span class="big-top"><svg class="ico-64"><use href="#i-analyze" /></svg></span><span class="big-label">Analyze<br />Data</span></button>
          <button class="big"><span class="big-top"><svg class="ico-64"><use href="#i-copilot" /></svg></span><span class="big-label">Copilot</span></button>
        </div>
      </div>

      <div class="formula-bar">
        <div class="name-box">
          <input v-model="cellName" aria-label="Name box" />
          <svg class="spin" viewBox="0 0 14 36"><path d="M7 0l7 12H0zM7 36l7-12H0z" fill="#c4c4c4" /></svg>
        </div>
        <button class="cancel" aria-label="Cancel"><svg class="ico-24"><use href="#i-x" /></svg></button>
        <button class="enter" aria-label="Enter"><svg class="ico-check"><use href="#i-check" /></svg></button>
        <button class="fx" aria-label="Insert function">fx</button>
        <input v-model="formula" class="formula" aria-label="Formula" />
        <button class="expand" aria-label="Expand formula bar"><svg viewBox="0 0 14 12"><path d="M0 0h14L7 12z" fill="#c8c8c8" /></svg></button>
      </div>

      <div class="sheet">
        <table>
          <colgroup>
            <col class="w-head" />
            <col v-for="c in columns" :key="c" :class="'w-' + c.toLowerCase()" />
          </colgroup>
          <thead>
            <tr>
              <th class="corner"><svg viewBox="0 0 60 60"><path d="M60 0v60H0z" fill="#565656" /></svg></th>
              <th v-for="c in columns" :key="c" :class="{ picked: c === 'E' }">{{ c }}</th>
            </tr>
          </thead>
          <tbody>
            <tr class="title-line">
              <th>1</th>
              <td colspan="4" class="sheet-title">VOTERS LIST OF BARANGAY MALIGAYA</td>
              <td></td>
              <td></td>
              <td></td>
            </tr>
            <tr class="labels">
              <th>2</th>
              <td>#</td>
              <td>Precinct #</td>
              <td>FullName</td>
              <td>Barangay</td>
              <td></td>
              <td></td>
              <td></td>
            </tr>
            <tr v-for="(v, i) in voters" :key="i">
              <th :class="{ picked: i === 1 }">{{ i + 3 }}</th>
              <td class="num">{{ i + 1 }}</td>
              <td>{{ v[0] }}</td>
              <td>{{ v[1] }}</td>
              <td>{{ barangay }}</td>
              <td :class="{ cursor: i === 1 }"></td>
              <td></td>
              <td></td>
            </tr>
            <tr>
              <th></th>
              <td v-for="c in columns" :key="c"></td>
            </tr>
          </tbody>
        </table>
      </div>

      <div class="sheet-tabs">
        <button class="arrow prev" aria-label="Previous sheet"><svg viewBox="0 0 14 20"><path d="M14 0v20L0 10z" fill="#777" /></svg></button>
        <button class="arrow" aria-label="Next sheet"><svg viewBox="0 0 14 20"><path d="M0 0v20l14-10z" fill="#777" /></svg></button>
        <button class="sheet-tab">Sheet1</button>
        <button class="add-sheet" aria-label="Add sheet"><svg viewBox="0 0 20 20"><path d="M10 0v20M0 10h20" stroke="#bcbcbc" stroke-width="4" /></svg></button>
      </div>

      <footer class="status">
        <span class="ready">Ready</span>
        <button class="a11y"><svg class="ico"><use href="#i-access" /></svg>Accessibility: Good to go</button>
        <div class="status-right">
          <button class="view on" aria-label="Normal view"><svg class="ico-28"><use href="#i-grid" /></svg></button>
          <button class="view" aria-label="Page layout view"><svg class="ico-28"><use href="#i-page" /></svg></button>
          <button class="view" aria-label="Page break view"><svg class="ico-28"><use href="#i-break" /></svg></button>
          <button class="step" aria-label="Zoom out"><svg viewBox="0 0 16 16"><path d="M0 8h16" stroke="#fff" stroke-width="4" /></svg></button>
          <input v-model="zoomStep" type="range" min="0" max="100" aria-label="Zoom" />
          <button class="step" aria-label="Zoom in"><svg viewBox="0 0 16 16"><path d="M8 0v16M0 8h16" stroke="#fff" stroke-width="4" /></svg></button>
          <span class="percent">170%</span>
        </div>
      </footer>
    </main>

    <!-- Dock -->
    <div class="dock-area">
      <nav class="dock">
        <button v-for="a in dockApps" :key="a.id" :aria-label="a.id" class="app" :class="[{ open: a.open }, a.id]">
          <svg><use :href="'#d-' + a.id" /></svg>
          <span v-if="a.label" class="app-label">{{ a.label }}</span>
          <span v-if="a.badge" class="badge">{{ a.badge }}</span>
        </button>
        <span class="dock-rule"></span>
        <button v-for="a in dockRecent" :key="a.id" :aria-label="a.id" class="app" :class="[{ open: a.open }, a.id]">
          <svg><use :href="'#d-' + a.id" /></svg>
        </button>
        <span class="dock-rule"></span>
        <button class="app trash" aria-label="Trash"><svg><use href="#d-trash" /></svg></button>
      </nav>
    </div>
  </div>
</template>

<style>
body {
  background: #09092b;
}
</style>

<style scoped>
* {
  box-sizing: border-box;
}

.desktop {
  display: flex;
  flex-direction: column;
  height: 100vh;
  overflow: hidden;
  color: #fff;
  font-family: Inter, 'Liberation Sans', sans-serif;
  background: radial-gradient(circle at 0 80px, #4a5570, transparent 60px), #09092b;
}

button {
  display: flex;
  align-items: center;
  padding: 0;
  border: 0;
  background: none;
  color: inherit;
  font: inherit;
}

svg {
  display: block;
  flex: none;
}
.defs {
  position: absolute;
  width: 0;
  height: 0;
}
.symbols {
  display: none;
}

.ico {
  width: 32px;
  height: 32px;
}
.ico-24 {
  width: 24px;
  height: 24px;
}
.ico-26 {
  width: 26px;
  height: 26px;
}
.ico-28 {
  width: 28px;
  height: 28px;
}
.ico-64 {
  width: 64px;
  height: 64px;
}
.ico-big {
  width: 60px;
  height: 64px;
}
.ico-paste {
  width: 56px;
  height: 64px;
}
.chev {
  width: 12px;
  height: 8px;
}
.chev.wide {
  width: 16px;
  height: 11px;
}
.dim {
  color: #999;
}

/* System menu bar */
.menubar {
  display: flex;
  justify-content: space-between;
  flex: none;
  height: 74px;
  padding: 0 34px 0 41px;
  border-bottom: 1px solid #000;
  background: linear-gradient(90deg, #14173a, #0b0b30 30%, #07072b 60%);
  font-size: 25px;
  font-weight: 500;
}
.menus,
.menu-extras {
  display: flex;
  align-items: center;
  gap: 42px;
  height: 70px;
}
.app-name {
  font-weight: 700;
}
.ico-apple {
  width: 26px;
  height: 32px;
}
.menu-extras {
  gap: 39px;
  color: #ececf2;
}
.ico-brushapp {
  width: 30px;
  height: 32px;
}
.power {
  display: flex;
  align-items: center;
  gap: 10px;
  font-size: 22px;
}
.ico-battery {
  width: 52px;
  height: 26px;
}
.ico-wifi {
  width: 34px;
  height: 26px;
}
.clock {
  margin-left: -3px;
}

/* Window */
.window {
  position: relative;
  display: flex;
  flex-direction: column;
  flex: 1;
  min-height: 0;
  overflow: hidden;
  border-radius: 20px;
  background: #282828;
}
.window::after {
  content: '';
  position: absolute;
  inset: 0;
  border: 2px solid rgba(160, 160, 160, 0.5);
  border-radius: 20px;
  pointer-events: none;
}

.titlebar {
  display: grid;
  grid-template-columns: 1fr auto 1fr;
  align-items: center;
  flex: none;
  height: 64px;
  padding: 0 24px 0 26px;
}
.title-left,
.lights,
.quick,
.pair,
.autosave {
  display: flex;
  align-items: center;
}
.lights {
  gap: 16px;
  margin-right: 51px;
}
.light {
  width: 24px;
  height: 24px;
  border-radius: 50%;
}
.red {
  background: radial-gradient(circle, #8c1a12 4px, #ed6a5e 5px);
}
.yellow {
  background: #f5bf4f;
}
.green {
  background: #61c554;
}
.autosave {
  gap: 19px;
  margin-right: 24px;
  color: #d4d4d4;
  font-size: 22px;
  font-weight: 500;
}
.autosave input {
  appearance: none;
  width: 56px;
  height: 28px;
  margin: 0;
  border-radius: 14px;
  background: radial-gradient(circle at 14px 14px, #fff 12px, transparent 13px), #1c1c1c;
}
.quick {
  gap: 22px;
}
.pair {
  gap: 14px;
}
.doc-title {
  gap: 10px;
  font-size: 23px;
  font-weight: 500;
}
.ico-file {
  width: 28px;
  height: 30px;
}
.title-right {
  display: flex;
  justify-content: flex-end;
  gap: 36px;
}

.tabrow {
  display: flex;
  justify-content: space-between;
  align-items: center;
  flex: none;
  height: 64px;
  padding: 0 20px 0 22px;
  font-size: 26px;
  font-weight: 500;
}
.tabs {
  display: flex;
  gap: 49px;
}
.tabs button {
  position: relative;
  height: 48px;
  padding-bottom: 6px;
  color: #dedede;
}
.tabs .active {
  font-weight: 700;
}
.tabs .active::after {
  content: '';
  position: absolute;
  left: 0;
  right: 0;
  bottom: 0;
  height: 6px;
  border-radius: 3px;
  background: #e0dfe0;
}
.actions {
  display: flex;
  gap: 20px;
}
.comments,
.share {
  justify-content: center;
  gap: 9px;
  height: 48px;
  border-radius: 10px;
  font-size: 25px;
}
.comments {
  width: 210px;
  border: 2px solid #4a4a4a;
  background: #545454;
}
.share {
  width: 178px;
  background: #3e8a46;
}
.share .wide {
  margin-left: 6px;
}

/* Ribbon */
.ribbon {
  display: flex;
  flex: none;
  height: 146px;
  padding-top: 4px;
  border-bottom: 2px solid #000;
  font-size: 21px;
  font-weight: 500;
}
.rule {
  flex: none;
  width: 2px;
  height: 124px;
  background: #484848;
}
.group {
  display: flex;
  flex: none;
}
.rows {
  flex-direction: column;
  gap: 16px;
  padding-top: 10px;
}
.row {
  display: flex;
  align-items: center;
  height: 48px;
}
.stack {
  display: flex;
  flex-direction: column;
}
.stack button {
  gap: 12px;
  height: 44px;
}
.mini-rule {
  width: 2px;
  height: 36px;
  margin: 0 4px;
  background: #484848;
}
.big {
  flex-direction: column;
  gap: 9px;
  padding-top: 6px;
}
.big-top {
  display: flex;
  align-items: center;
  gap: 10px;
}
.big-label {
  line-height: 24px;
  font-size: 20px;
  text-align: center;
  white-space: nowrap;
}
.text-btn {
  gap: 12px;
  white-space: nowrap;
}

.g-clip {
  width: 208px;
  padding-left: 34px;
  gap: 14px;
}
.paste .big-label {
  padding-right: 9px;
}
.g-font {
  width: 538px;
  padding-left: 20px;
}
.g-align {
  width: 322px;
  padding-left: 20px;
}
.g-wrap {
  width: 276px;
  padding-left: 24px;
}
.g-number {
  width: 350px;
  padding-left: 19px;
}
.g-styles {
  width: 362px;
  padding-left: 24px;
  gap: 15px;
}
.g-styles .big {
  width: 84px;
}
.g-styles .cond {
  width: 112px;
}
.g-cells {
  width: 192px;
  padding-left: 26px;
}
.g-edit {
  width: 308px;
  padding-left: 26px;
  gap: 17px;
}
.g-addins {
  width: 128px;
  justify-content: center;
}
.g-ai {
  padding-left: 22px;
  gap: 10px;
}
.g-ai .big {
  width: 79px;
}

.select {
  position: relative;
  display: flex;
}
.select select {
  appearance: none;
  width: 100%;
  height: 48px;
  padding: 0 10px;
  border: 2px solid #3d3d3d;
  border-bottom-color: #5a5a5a;
  border-radius: 7px;
  background: #333;
  color: #fff;
  font: inherit;
  font-size: 23px;
}
.select .chev {
  position: absolute;
  right: 9px;
  top: 20px;
  pointer-events: none;
}
.font-name {
  width: 282px;
  margin-right: 5px;
}
.font-size {
  width: 107px;
  margin-right: 14px;
}
.grow {
  margin-right: 20px;
}
.number-format {
  width: 310px;
}
.font-tools {
  gap: 18px;
  padding-left: 8px;
}
.letter {
  display: block;
  width: 34px;
  color: #d8d8d8;
  font-size: 27px;
  font-weight: 300;
  line-height: 32px;
  text-align: center;
}
.bold {
  font-weight: 700;
}
.italic {
  font-family: 'Liberation Serif', serif;
  font-style: italic;
}
.underline {
  text-decoration: underline;
  text-underline-offset: 4px;
}
.g-align .row {
  gap: 4px;
}
.g-align .mini-rule {
  margin: 0 12px;
}
.sq {
  justify-content: center;
  width: 48px;
  height: 48px;
  border-radius: 7px;
}
.on {
  background: #4b4b4b;
}
.number-tools {
  gap: 19px;
  padding-left: 8px;
}

/* Formula bar */
.formula-bar {
  display: flex;
  align-items: center;
  flex: none;
  height: 58px;
  padding: 0 2px 6px 0;
  background: linear-gradient(#282828 52px, #b4b4b4 52px 53px, #fff 53px 56px, #b4b4b4 56px);
}
.name-box {
  display: flex;
  align-items: center;
  width: 170px;
  height: 50px;
  margin-right: 29px;
  padding: 0 2px 0 20px;
  border: 2px solid #424242;
  border-left: 0;
  background: #262626;
}
.name-box input {
  flex: 1;
  min-width: 0;
  padding: 0;
  border: 0;
  background: none;
  color: #e4e4e4;
  font: inherit;
  font-size: 23px;
}
.spin {
  width: 14px;
  height: 36px;
}
.cancel {
  margin-right: 32px;
}
.enter {
  margin-right: 30px;
}
.ico-check {
  width: 30px;
  height: 24px;
}
.fx {
  width: 46px;
  color: #979797;
  font-family: 'Liberation Serif', serif;
  font-size: 38px;
  font-style: italic;
  line-height: 40px;
}
.formula {
  flex: 1;
  min-width: 0;
  height: 42px;
  border: 2px solid #424242;
  border-radius: 6px 0 0 6px;
  background: #373737;
  color: #fff;
  font: inherit;
  font-size: 23px;
}
.expand {
  justify-content: center;
  width: 46px;
  height: 38px;
  border-radius: 4px;
  background: #202020;
}
.expand svg {
  width: 14px;
  height: 12px;
}

/* Worksheet */
.sheet {
  flex: 1;
  min-height: 0;
  overflow: hidden;
  background: #fff;
  color: #000;
  font-family: 'Liberation Sans', Arial, sans-serif;
  font-size: 34px;
  line-height: 40px;
}
table {
  width: 2972px;
  table-layout: fixed;
  border-collapse: separate;
  border-spacing: 0;
}
.w-head {
  width: 74px;
}
.w-a {
  width: 190px;
}
.w-b {
  width: 374px;
}
.w-c {
  width: 792px;
}
.w-d,
.w-e {
  width: 630px;
}
.w-f {
  width: 140px;
}
.w-g {
  width: 142px;
}
th {
  padding: 0;
  background: #171717;
  color: #fff;
  font-weight: 400;
  text-align: center;
}
thead th {
  height: 74px;
  border-right: 2px solid #555;
  border-bottom: 2px solid #bdbdbd;
}
thead .picked {
  border-bottom: 4px solid #3b734a;
}
.corner svg {
  width: 60px;
  height: 60px;
  margin: 2px 0 0 8px;
}
thead .corner {
  border-right-color: #bdbdbd;
}
tbody th,
td {
  height: 58px;
  vertical-align: bottom;
}
tbody th {
  border-right: 2px solid #bdbdbd;
  border-bottom: 2px solid #6b6b6b;
}
.picked {
  background: #555;
}
tbody .picked {
  border-right: 3px solid #3b734a;
}
td {
  padding: 0 5px 0 6px;
  border-right: 2px solid #d4d4d4;
  border-bottom: 2px solid #d4d4d4;
  white-space: nowrap;
}
.title-line th,
.title-line td {
  padding-bottom: 5px;
}
.title-line .sheet-title {
  font-size: 40px;
  font-weight: 700;
  text-align: center;
}
.labels td {
  font-weight: 700;
  text-align: center;
}
td.num {
  padding-top: 2px;
  vertical-align: top;
  text-align: right;
}
.cursor {
  position: relative;
}
.cursor::before {
  content: '';
  position: absolute;
  inset: -4px;
  border: 4px solid #3b734a;
}
.cursor::after {
  content: '';
  position: absolute;
  right: -8px;
  bottom: -8px;
  width: 10px;
  height: 10px;
  border: 2px solid #fff;
  background: #3b734a;
}

/* Sheet tabs */
.sheet-tabs {
  display: flex;
  align-items: center;
  flex: none;
  height: 53px;
  padding-left: 30px;
  border-top: 2px solid #6a6a6a;
  border-bottom: 1px solid #000;
  background: #333;
}
.arrow svg {
  width: 14px;
  height: 20px;
}
.prev {
  margin-right: 32px;
}
.sheet-tab {
  align-self: flex-start;
  justify-content: center;
  width: 158px;
  height: 45px;
  margin: -2px 0 0 31px;
  padding-top: 8px;
  border-bottom: 2px solid #6a6a6a;
  border-radius: 0 0 5px 5px;
  background: #fff;
  color: #3f8350;
  font-size: 23px;
  font-weight: 700;
}
.add-sheet {
  align-self: flex-start;
  justify-content: center;
  width: 77px;
  height: 40px;
  padding-top: 8px;
  border-right: 2px solid #6f6f6f;
}
.add-sheet svg {
  width: 20px;
  height: 20px;
}

/* Status bar */
.status {
  display: flex;
  align-items: center;
  flex: none;
  height: 45px;
  padding-left: 49px;
  background: linear-gradient(#4a4a4a, #3b3b3b);
  font-size: 23px;
}
.ready {
  margin-right: 40px;
}
.a11y {
  gap: 9px;
  font-size: 24px;
}
.status-right {
  display: flex;
  align-items: center;
  height: 100%;
  margin-left: auto;
  padding-right: 51px;
}
.view {
  justify-content: center;
  width: 72px;
  height: 100%;
}
.view.on {
  width: 74px;
  background: #5e5e5e;
}
.step {
  margin: 0 14px;
}
.step svg {
  width: 16px;
  height: 16px;
}
.status input {
  appearance: none;
  width: 200px;
  height: 32px;
  margin: 0;
  background: none;
}
.status input::-webkit-slider-runnable-track {
  height: 8px;
  border-radius: 4px;
  background: radial-gradient(circle at 100px 4px, #444 3px, #7c7c7c 4px);
}
.status input::-webkit-slider-thumb {
  appearance: none;
  width: 32px;
  height: 32px;
  margin-top: -12px;
  border-radius: 50%;
  background: #a1a1a1;
}
.percent {
  margin-left: 22px;
}

/* Dock */
.dock-area {
  display: flex;
  justify-content: center;
  align-items: flex-start;
  flex: none;
  height: 108px;
  padding-top: 2px;
  background:
    linear-gradient(#020208, rgba(4, 4, 16, 0.5) 30px, transparent 70px),
    radial-gradient(ellipse 22% 180px at 82% 80%, #2f3a58, rgba(9, 9, 43, 0)),
    #09092b;
}
.dock {
  display: flex;
  gap: 18px;
  height: 95px;
  padding: 13px 12px 0;
  border: 2px solid #3b3a50;
  border-radius: 28px;
  background: #18172e;
}
.app {
  position: relative;
  width: 60px;
  height: 60px;
}
.app svg {
  width: 60px;
  height: 60px;
}
.app.textedit svg,
.app.trash svg {
  height: 72px;
  margin: -6px 0;
}
.open::after {
  content: '';
  position: absolute;
  left: 26px;
  top: 69px;
  width: 8px;
  height: 8px;
  border-radius: 50%;
  background: #9a99b5;
}
.app-label {
  position: absolute;
  inset: 0;
  font-size: 17px;
  font-weight: 500;
  line-height: 58px;
  text-align: center;
}
.canva .app-label {
  font-family: 'Liberation Serif', serif;
  font-size: 20px;
  font-style: italic;
  font-weight: 700;
}
.badge {
  position: absolute;
  top: -7px;
  right: -9px;
  width: 28px;
  height: 28px;
  border-radius: 50%;
  background: #df4a3e;
  font-size: 17px;
  line-height: 28px;
  text-align: center;
}
.dock-rule {
  width: 2px;
  height: 72px;
  margin: -3px 8px 0;
  background: #45445a;
}
</style>
